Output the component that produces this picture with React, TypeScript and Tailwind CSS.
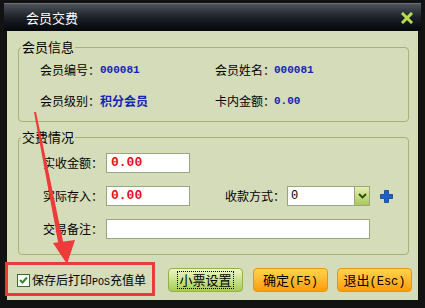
import React from "react";

const cjk = { fontFamily: '"Noto Sans CJK SC", "Liberation Sans", sans-serif' };
const mono = { fontFamily: '"Liberation Mono", "DejaVu Sans Mono", monospace' };

function Input({ value, w }: { value?: string; w: string }) {
  return (
    <div
      className={`${w} h-[20px] shrink-0 bg-white border border-[#9aa67e] flex items-center pl-[4px] text-[13px] font-bold text-[#e0101a]`}
      style={mono}
    >
      {value}
    </div>
  );
}

function Legend({ children }: { children: React.ReactNode }) {
  return (
    <legend className="ml-[2px] px-[1px] text-[13px] leading-[14px] text-black">{children}</legend>
  );
}

function Label({ children, w }: { children: React.ReactNode; w: string }) {
  return <span className={`${w} shrink-0 whitespace-nowrap`}>{children}</span>;
}

export default function App() {
  return (
    <div className="relative w-[425px] h-[308px] bg-[#121212] overflow-hidden" style={cjk}>
      <div className="pt-[3px] px-[4px]">
        {/* title bar */}
        <div className="h-[28px] flex items-center justify-between bg-gradient-to-b from-[#4e545c] via-[#1c2128] to-[#04070b] border-t border-[#6a7078]">
          <span className="ml-[22px] text-[13px] text-white">会员交费</span>
          <svg width="12" height="12" viewBox="0 0 12 12" className="mr-[8px]">
            <path d="M2 2 L10 10 M10 2 L2 10" stroke="#b8dc50" strokeWidth="3" strokeLinecap="square" />
          </svg>
        </div>

        {/* body */}
        <div className="mx-[3px] h-[269px] bg-[#d4dcb9] pl-[11px] pr-[9px] pt-[9px]">
          <fieldset className="h-[82px] border border-[#a3b573] rounded-[4px]">
            <Legend>会员信息</Legend>
            <div className="pt-[6px] pl-[21px] grid grid-cols-[175px_1fr] gap-y-[11px] text-[12px]">
              <div className="h-[20px] flex items-center">
                <Label w="w-[60px]">会员编号：</Label>
                <span className="font-bold text-[11px] text-[#1424b4]" style={mono}>000081</span>
              </div>
              <div className="h-[20px] flex items-center">
                <Label w="w-[59px]">会员姓名：</Label>
                <span className="font-bold text-[11px] text-[#1424b4]" style={mono}>000081</span>
              </div>
              <div className="h-[20px] flex items-center">
                <Label w="w-[60px]">会员级别：</Label>
                <span className="font-bold text-[12px] text-[#1424b4]">积分会员</span>
              </div>
              <div className="h-[20px] flex items-center">
                <Label w="w-[59px]">卡内金额：</Label>
                <span className="font-bold text-[11px] text-[#1424b4]" style={mono}>0.00</span>
              </div>
            </div>
          </fieldset>

          <fieldset className="mt-[8px] h-[125px] border border-[#a3b573] rounded-[4px]">
            <Legend>交费情况</Legend>
            <div className="pt-[9px] pl-[24px] flex flex-col gap-[13px] text-[12px]">
              <div className="flex items-center">
                <Label w="w-[63px]">实收金额：</Label>
                <Input w="w-[84px]" value="0.00" />
              </div>
              <div className="flex items-center">
                <Label w="w-[63px]">实际存入：</Label>
                <Input w="w-[84px]" value="0.00" />
                <Label w="ml-[35px] w-[62px]">收款方式：</Label>
                <div className="w-[83px] h-[20px] shrink-0 bg-white border border-[#9aa67e] flex items-center justify-between pl-[3px]">
                  <span className="text-[12px]" style={mono}>0</span>
                  <div className="w-[15px] h-[18px] bg-gradient-to-b from-[#e4f0b0] to-[#a9c85a] border-l border-[#9aa67e] flex items-center justify-center">
                    <svg width="9" height="6" viewBox="0 0 9 6">
                      <path d="M1 1 L4.5 4.5 L8 1" stroke="#2c4a10" strokeWidth="1.8" fill="none" />
                    </svg>
                  </div>
                </div>
                <svg width="13" height="13" viewBox="0 0 13 13" className="ml-[10px] shrink-0">
                  <path d="M4.5 0.5 H8.5 V4.5 H12.5 V8.5 H8.5 V12.5 H4.5 V8.5 H0.5 V4.5 H4.5 Z" fill="#1a62c8" stroke="#0c3c90" strokeWidth="0.8" />
                </svg>
              </div>
              <div className="flex items-center">
                <Label w="w-[63px]">交易备注：</Label>
                <Input w="w-[264px]" />
              </div>
            </div>
          </fieldset>

          {/* bottom bar */}
          <div className="mt-[13px] flex items-center">
            <div className="-ml-[1px] w-[151px] shrink-0 flex items-center">
              <div className="w-[13px] h-[13px] bg-white border border-[#3d6e2a] flex items-center justify-center">
                <svg width="9" height="8" viewBox="0 0 9 8">
                  <path d="M1 4 L3.5 6.5 L8 1.5" stroke="#2e8a2e" strokeWidth="2" fill="none" />
                </svg>
              </div>
              <span className="ml-[2px] text-[12px] whitespace-nowrap">
                保存后打印<span className="text-[10px]" style={mono}>POS</span>充值单
              </span>
            </div>
            <button className="w-[75px] h-[24px] shrink-0 rounded-[4px] border border-[#94b048] bg-gradient-to-b from-[#eef7c4] to-[#a6cc4e] text-[13px] text-black flex items-center justify-center">
              <span className="border border-dotted border-black px-[1px] leading-[16px]">小票设置</span>
            </button>
            <button className="ml-[10px] w-[75px] h-[24px] shrink-0 rounded-[4px] border border-[#e89410] bg-gradient-to-b from-[#ffd44a] to-[#ff9c00] text-[13px] text-black">
              确定<span style={mono} className="text-[12px]">(F5)</span>
            </button>
            <button className="ml-[9px] w-[75px] h-[24px] shrink-0 rounded-[4px] border border-[#e89410] bg-gradient-to-b from-[#ffd44a] to-[#ff9c00] text-[13px] text-black">
              退出<span style={mono} className="text-[12px]">(Esc)</span>
            </button>
          </div>
        </div>
      </div>

      {/* annotation: red box and arrow */}
      <div className="absolute left-[5px] top-[262px] w-[150px] h-[34px] border-[3px] border-[#ec3a3a]" />
      <svg className="absolute left-0 top-0" width="425" height="308" viewBox="0 0 425 308">
        <polygon points="34,112 36,112 64,246 59,247" fill="#ee3a3a" />
        <polygon points="53,243 75,240 67,264" fill="#ee3a3a" />
      </svg>
    </div>
  );
}
